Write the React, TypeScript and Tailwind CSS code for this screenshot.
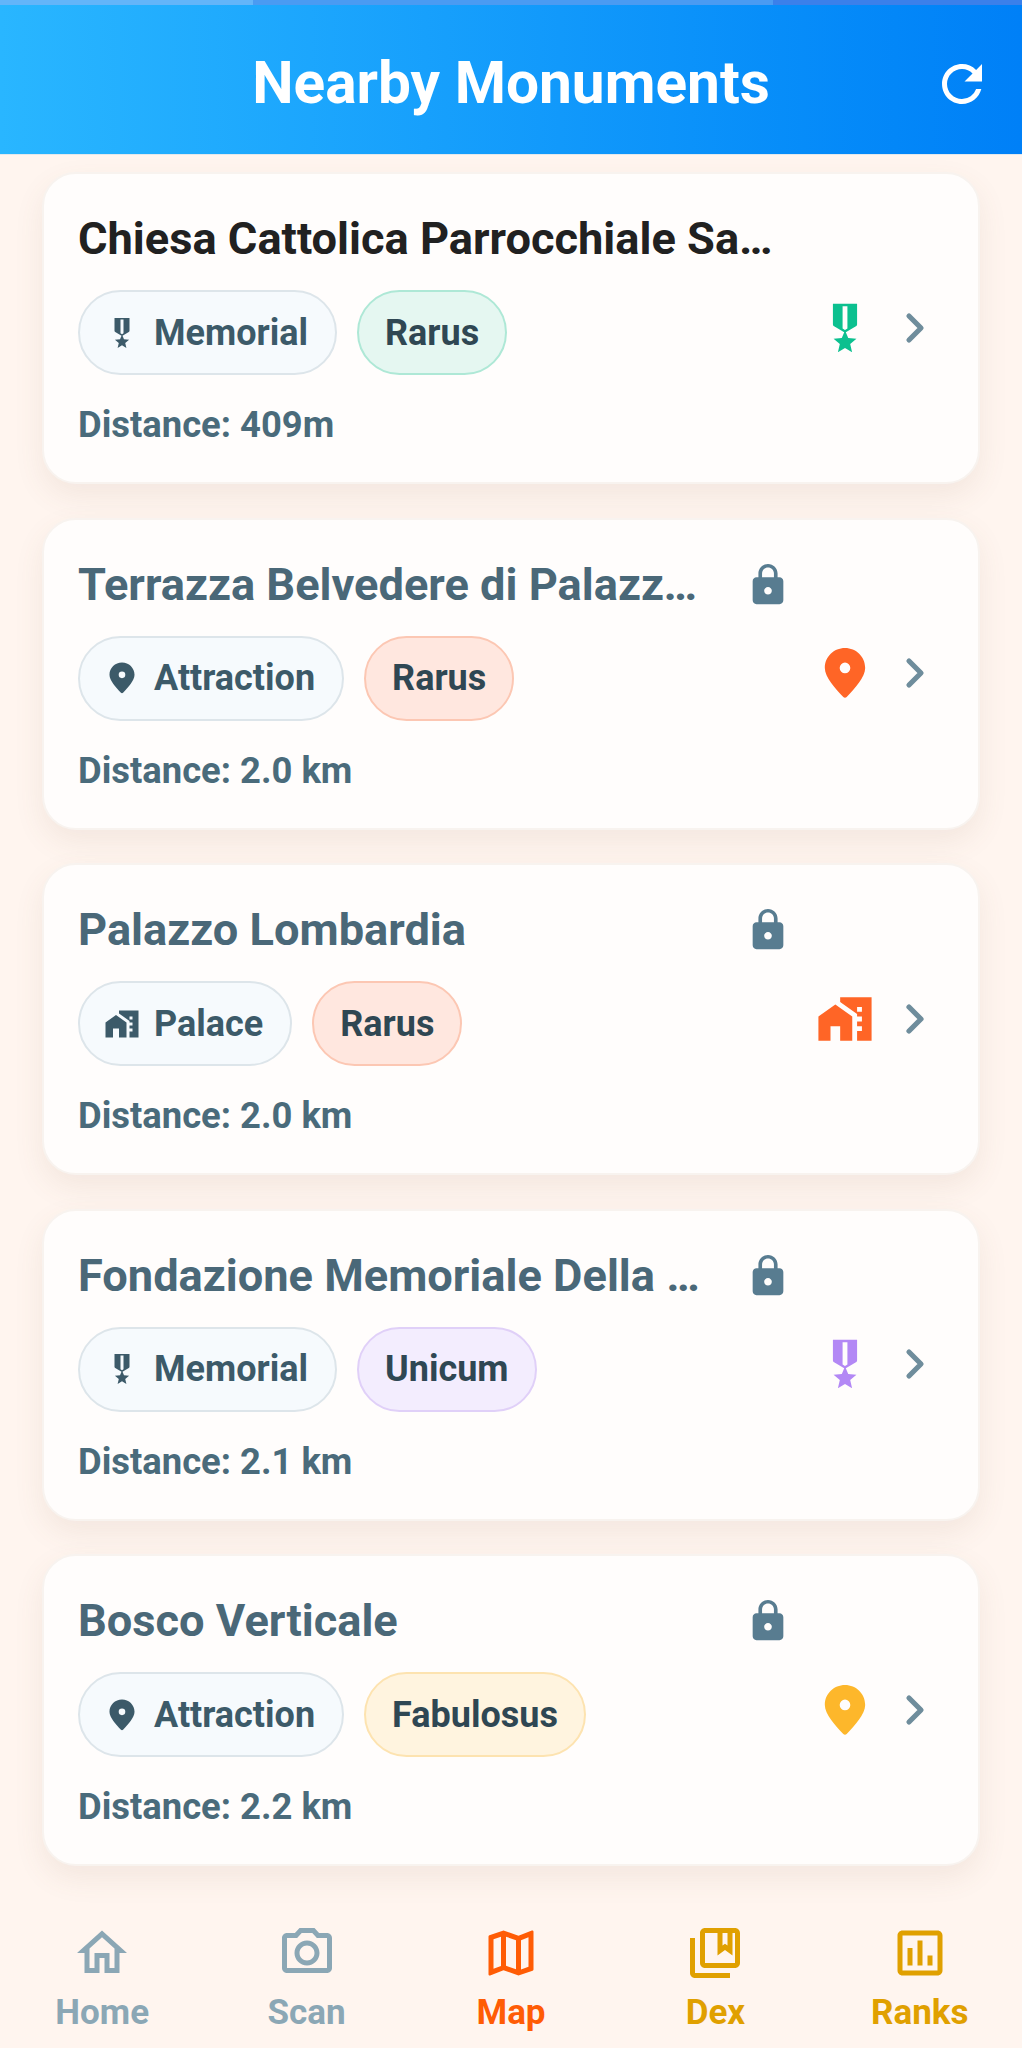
import { ChevronRight } from 'lucide-react'
import {
  MdLock,
  MdMapsHomeWork,
  MdMilitaryTech,
  MdOutlineAssessment,
  MdOutlineCameraAlt,
  MdOutlineCollectionsBookmark,
  MdOutlineHome,
  MdOutlineMap,
  MdRefresh,
} from 'react-icons/md'

type KindIconProps = { size: number; className?: string }

// the Md place glyph is too narrow, this one has the fatter head of the app's pin
function PinIcon({ size, className }: KindIconProps) {
  return (
    <svg width={size} height={size} viewBox="0 0 24 24" fill="currentColor" className={className}>
      <path
        fillRule="evenodd"
        d="M12 1.7C16.6 1.7 20.35 5.3 20.35 9.9C20.35 13.7 16 18.4 12.7 21.9C12.3 22.3 11.7 22.3 11.3 21.9C8 18.4 3.65 13.7 3.65 9.9C3.65 5.3 7.4 1.7 12 1.7ZM12 7.7A2.2 2.2 0 1 0 12 12.1A2.2 2.2 0 1 0 12 7.7Z"
      />
    </svg>
  )
}

type Monument = {
  name: string
  locked: boolean
  kind: string
  KindIcon: (props: KindIconProps) => React.ReactNode
  rarity: string
  chipClass: string
  iconClass: string
  distance: string
}

const monuments: Monument[] = [
  {
    name: 'Chiesa Cattolica Parrocchiale San Marco',
    locked: false,
    kind: 'Memorial',
    KindIcon: MdMilitaryTech,
    rarity: 'Rarus',
    chipClass: 'bg-[#e5f7f1] border-[#aee8d6]',
    iconClass: 'text-[#0cc08f]',
    distance: '409m',
  },
  {
    name: 'Terrazza Belvedere di Palazzo Lombardia',
    locked: true,
    kind: 'Attraction',
    KindIcon: PinIcon,
    rarity: 'Rarus',
    chipClass: 'bg-[#ffe7df] border-[#fcc7b3]',
    iconClass: 'text-[#ff6526]',
    distance: '2.0 km',
  },
  {
    name: 'Palazzo Lombardia',
    locked: true,
    kind: 'Palace',
    KindIcon: MdMapsHomeWork,
    rarity: 'Rarus',
    chipClass: 'bg-[#ffe7df] border-[#fcc7b3]',
    iconClass: 'text-[#ff6526]',
    distance: '2.0 km',
  },
  {
    name: 'Fondazione Memoriale Della Shoah',
    locked: true,
    kind: 'Memorial',
    KindIcon: MdMilitaryTech,
    rarity: 'Unicum',
    chipClass: 'bg-[#f3edfe] border-[#e0d0f8]',
    iconClass: 'text-[#b388f5]',
    distance: '2.1 km',
  },
  {
    name: 'Bosco Verticale',
    locked: true,
    kind: 'Attraction',
    KindIcon: PinIcon,
    rarity: 'Fabulosus',
    chipClass: 'bg-[#fff4df] border-[#fde3b0]',
    iconClass: 'text-[#fdb72b]',
    distance: '2.2 km',
  },
]

const navItems = [
  { label: 'Home', Icon: MdOutlineHome, color: 'text-[#8ba7b5]' },
  { label: 'Scan', Icon: MdOutlineCameraAlt, color: 'text-[#8ba7b5]' },
  { label: 'Map', Icon: MdOutlineMap, color: 'text-[#ff5c05]' },
  { label: 'Dex', Icon: MdOutlineCollectionsBookmark, color: 'text-[#e0a000]' },
  { label: 'Ranks', Icon: MdOutlineAssessment, color: 'text-[#e0a000]' },
]

function MonumentCard({ monument }: { monument: Monument }) {
  const { KindIcon } = monument
  return (
    <div className="h-[312px] shrink-0 rounded-[34px] border-2 border-[#f8f3ef] bg-[#fffdfc] pl-[34px] pr-[39px] pt-[38px] shadow-[0_12px_30px_rgba(120,90,70,0.09)]">
      <div className="flex h-[54px] items-center">
        <div
          className={`truncate text-[45.2px] font-bold leading-[54px] ${
            monument.locked ? 'w-[628px] text-[#4a6878]' : 'w-[704px] text-[#212121]'
          }`}
        >
          {monument.name}
        </div>
        {monument.locked && <MdLock className="ml-[39px] shrink-0 text-[#587c90]" size={46} />}
      </div>
      <div className="mt-[24px] flex items-center">
        <div className="flex h-[85px] items-center gap-[14px] rounded-full border-2 border-[#dde5ea] bg-[#f6fafd] pl-[24px] pr-[27px] text-[36px] font-bold text-[#3c5a69]">
          <KindIcon size={36} />
          {monument.kind}
        </div>
        <div
          className={`ml-[20px] flex h-[85px] items-center rounded-full border-2 px-[26px] text-[36px] font-bold text-[#2f4753] ${monument.chipClass}`}
        >
          {monument.rarity}
        </div>
        <div className="mb-[10px] ml-auto flex items-center gap-[17px]">
          <KindIcon className={monument.iconClass} size={58} />
          <ChevronRight className="text-[#6f8d9c]" size={48} strokeWidth={2.6} />
        </div>
      </div>
      <div className="mt-[30px] text-[36.4px] font-bold leading-[40px] text-[#4a6b7b]">
        Distance: {monument.distance}
      </div>
    </div>
  )
}

export default function App() {
  return (
    <div className="flex h-[2048px] w-[1022px] flex-col overflow-hidden bg-[#fff5ef] font-['Roboto',sans-serif]">
      <div className="flex h-[5px] shrink-0">
        <div className="w-[253px] bg-[#63b5f9]" />
        <div className="w-[520px] bg-[#4a9bf2]" />
        <div className="flex-1 bg-[#3b80ea]" />
      </div>
      <header className="relative flex h-[150px] shrink-0 items-center justify-center border-b border-[#e3e8ec] bg-gradient-to-r from-[#29b6ff] to-[#0080f7] pt-[9px]">
        <h1 className="text-[58.6px] font-bold text-white">Nearby Monuments</h1>
        <MdRefresh className="absolute right-[30px] top-[49px] text-white" size={60} />
      </header>
      <main className="flex flex-1 flex-col gap-[33.5px] overflow-hidden px-[42px] pt-[17px]">
        {monuments.map((monument) => (
          <MonumentCard key={monument.name} monument={monument} />
        ))}
      </main>
      <nav className="flex h-[143px] shrink-0 bg-[#fff5ef]">
        {navItems.map(({ label, Icon, color }) => (
          <div key={label} className={`flex flex-1 flex-col items-center pt-[18px] ${color}`}>
            <Icon size={60} />
            <span className="mt-[10px] text-[35px] font-bold leading-[40px]">{label}</span>
          </div>
        ))}
      </nav>
    </div>
  )
}
